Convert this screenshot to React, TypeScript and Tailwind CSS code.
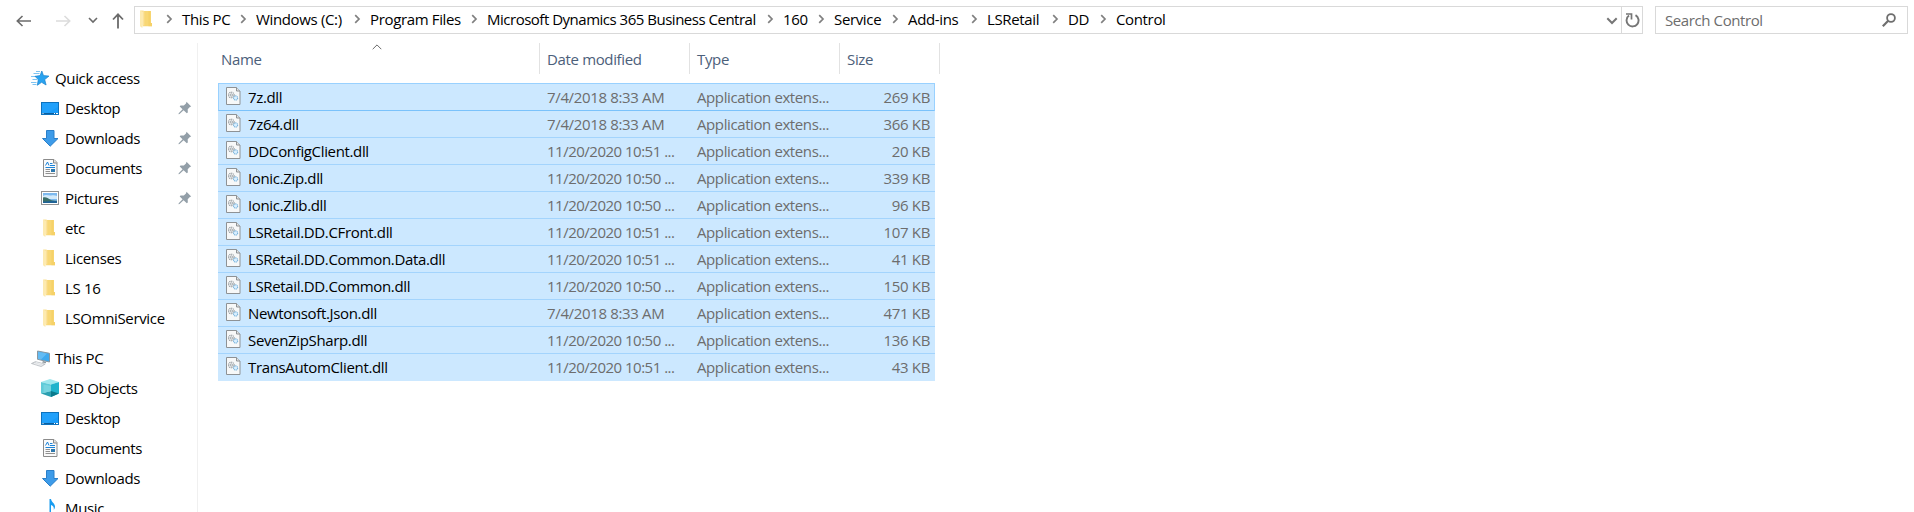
import type { ReactNode } from "react";

const Folder = () => (
  <svg width="18" height="18" viewBox="0 0 18 18" className="shrink-0">
    <path d="M3.500 1H13v12h1v3.200H5z" fill="#f8d775" />
    <path d="M12.300 1v12h1.700v3.200H10.500V1z" fill="#f5ce62" opacity=".7" />
    <path d="M2 .5l3.200 1v12.300L4.300 18 2 16.200z" fill="#fdeab0" />
    <path d="M2 .5h3.500l.8.9v14H5V2z" fill="#fbe19a" />
  </svg>
);

const Star = () => (
  <svg width="18" height="18" viewBox="0 0 18 18" className="shrink-0">
    <path d="M2.500 4.500h6M5 2.500h4M0 7.500h5M1.500 10.500h5M0 13.500h5.500M1.500 15.500h4" stroke="#6fbdf0" strokeWidth=".9" />
    <path d="M10.800 2l1.700 4.600 5.500.5-4.300 3.500 1.400 5.400-4.500-2.700-4.300 3 1-5.700-3.300-3.300 5.100-.7z" fill="#29a3f0" stroke="#1d83cc" strokeWidth=".7" />
  </svg>
);

const Desktop = () => (
  <svg width="18" height="18" viewBox="0 0 18 18" className="shrink-0">
    <rect x=".5" y="3.500" width="17" height="12" fill="#1a9cf9" stroke="#0e72bd" />
    <path d="M17 4v4L6 14H1V4z" fill="#35adff" opacity=".35" />
    <path d="M1 14.500h16" stroke="#0b5e9e" />
    <path d="M1.500 14.500h1M13 14.500h1M15 14.500h2" stroke="#fff" />
  </svg>
);

const Down = () => (
  <svg width="18" height="18" viewBox="0 0 18 18" className="shrink-0">
    <path d="M5.500 1.500h7.500V9.500h4L9.200 17.200 1.500 9.500h4z" fill="#3d9be9" stroke="#2a7fc9" />
  </svg>
);

const Doc = () => (
  <svg width="18" height="18" viewBox="0 0 18 18" className="shrink-0">
    <path d="M2.500.5h10.500l3 3v14H2.500z" fill="#fafafa" stroke="#8b8b8b" />
    <path d="M12.500.5v3.500H16" fill="#e4e4e4" stroke="#8b8b8b" />
    <path d="M4.500 6.500l2-3.500 1.500 3.500M9 4.500h2.500M9 6.500h5M4.500 8.500h9.500" stroke="#1c83d8" fill="none" />
    <path d="M4.500 10.500H9M4.500 12.500H9M4.500 14.500h9.500" stroke="#909090" />
    <rect x="10" y="10" width="4" height="3" fill="#2d78ad" />
  </svg>
);

const Picture = () => (
  <svg width="18" height="18" viewBox="0 0 18 18" className="shrink-0">
    <rect x=".5" y="2.500" width="17" height="13" fill="#fff" stroke="#929292" />
    <rect x="2" y="4" width="14" height="10" fill="#7db9ee" />
    <path d="M2 7c3-2 6 0 8-.5S14 6 16 7v3H2z" fill="#d3eafa" />
    <path d="M2 8.500c3-.8 5 .5 7 2s5 1 7 1.200V14H2z" fill="#3b6f68" />
    <path d="M2 12.500c5 0 9-1 14-.3V14H2z" fill="#1f6396" />
  </svg>
);

const Computer = () => (
  <svg width="19" height="18" viewBox="0 0 19 18" className="shrink-0">
    <path d="M6.500 2l12 2.300v8.700L6.500 10.300z" fill="#3fa9ee" stroke="#8b969e" strokeWidth="1" />
    <path d="M7 2.700l9 1.700-6 6.200-3-.7z" fill="#7cc8f7" opacity=".6" />
    <path d="M12 12l3 .7v1.500l-4-.8z" fill="#8f989e" />
    <path d="M.4 14.500l4-1.900 9.800 2.500-4 2.500z" fill="#d6dade" stroke="#a9afb4" strokeWidth=".6" />
    <path d="M3 14.400l7.500 2M5 13.500l7 1.900" stroke="#f6f6f6" strokeWidth=".7" />
  </svg>
);

const Cube = () => (
  <svg width="18" height="18" viewBox="0 0 18 18" className="shrink-0">
    <path d="M0 3l9-3 9 3-8 2.500z" fill="#9fe8ee" />
    <path d="M0 3l10 2.500V12L0 14.500z" fill="#5fcbd8" />
    <path d="M10 5.500L18 3v11.500L10 18z" fill="#1fb3cc" />
    <path d="M0 14.500L10 12v6z" fill="#2b9fb0" />
    <path d="M10 12l8 2.500L10 18z" fill="#0b7a8c" />
    <path d="M2.500 5.500L10 7v5l-7.500 2z" fill="#86dbe4" opacity=".6" />
  </svg>
);

const Note = () => (
  <svg width="18" height="18" viewBox="0 0 18 18" className="shrink-0">
    <path d="M8.500 0H10c.3 3 4 4.500 4 7.500 0 1.500-.6 2.500-1.300 3.500.6-3-.7-4.200-2.700-5V14c0 2-1.800 3.500-4 3.500-1.500 0-2.500-.8-2.500-2 0-1.700 2-3 5-2.500z" fill="#189cf0" />
  </svg>
);

const Pin = () => (
  <svg width="14" height="14" viewBox="0 0 14 14" className="shrink-0">
    <path d="M8.500.8L13.200 5.500l-1.300.5-2.200 2.300.1 3.200-1 .8L5.600 9.300 1.500 13l-1 .2.200-1L4.600 8.300 1.700 5.500l.8-1 3.300.1 2.200-2.200z" fill="#939fa8" />
  </svg>
);

const Dll = () => (
  <svg width="15" height="18" viewBox="0 0 15 18" className="shrink-0">
    <path d="M.5.5h10l3.500 3.500v13.500H.5z" fill="#f7f8f8" stroke="#8e9295" />
    <path d="M10.500.5V4H14" fill="#dfe2e4" stroke="#8e9295" />
    <circle cx="5.300" cy="8" r="2.800" fill="none" stroke="#8d9499" strokeWidth="1.100" strokeDasharray="1.200 .6" />
    <circle cx="5.300" cy="8" r="1.200" fill="none" stroke="#8d9499" strokeWidth=".8" />
    <circle cx="9.600" cy="11" r="2.100" fill="#d9efff" stroke="#78b3dc" strokeWidth="1.100" strokeDasharray="1.200 .5" />
  </svg>
);

const Chevron = () => (
  <svg width="7" height="10" viewBox="0 0 7 10" className="shrink-0">
    <path d="M1.200 1.200L5 5 1.200 8.800" fill="none" stroke="#808080" strokeWidth="1.700" />
  </svg>
);

const ChevronDown = ({ className }: { className: string }) => (
  <svg width="12" height="8" viewBox="0 0 12 8" className={className}>
    <path d="M1.300 1.300L6 6l4.700-4.700" fill="none" stroke="currentColor" strokeWidth="2" />
  </svg>
);

const crumbs: [string, string][] = [
  ["This PC", "w-[74px]"],
  ["Windows (C:)", "w-[114px]"],
  ["Program Files", "w-[117px]"],
  ["Microsoft Dynamics 365 Business Central", "w-[296px] tracking-[-0.49px]"],
  ["160", "w-[51px]"],
  ["Service", "w-[74px]"],
  ["Add-ins", "w-[79px]"],
  ["LSRetail", "w-[81px]"],
  ["DD", "w-[48px]"],
  ["Control", "w-[60px]"],
];

const AddressBar = () => (
  <header className="flex h-[43px] pt-1.5">
    <nav className="flex h-7 w-[134px] shrink-0 items-center pl-4 text-[#6b6b6b]">
      <svg width="16" height="12" viewBox="0 0 16 12" className="mt-0.5">
        <path d="M6.500 1L1.300 6l5.200 5M1.500 6H15" fill="none" stroke="currentColor" strokeWidth="1.600" />
      </svg>
      <svg width="16" height="12" viewBox="0 0 16 12" className="mt-0.5 ml-[23px] text-[#dcdcdc]">
        <path d="M9.500 1l5.200 5-5.200 5M14.500 6H1" fill="none" stroke="currentColor" strokeWidth="1.600" />
      </svg>
      <svg width="10" height="7" viewBox="0 0 10 7" className="ml-[17px]">
        <path d="M1 1l4 4 4-4" fill="none" stroke="currentColor" strokeWidth="1.600" />
      </svg>
      <svg width="12" height="16" viewBox="0 0 12 16" className="mt-0.5 ml-3.5">
        <path d="M1 6.500L6 1.300l5 5.200M6 1.500V15.500" fill="none" stroke="currentColor" strokeWidth="1.800" />
      </svg>
    </nav>
    <div className="flex h-7 w-[1509px] shrink-0 items-center border border-[#d9d9d9]">
      <div className="flex w-[31px] pb-0.5 pl-[3px]">
        <Folder />
      </div>
      <div className="flex flex-1 items-center pb-0.5">
        <Chevron />
        <div className="flex items-center pl-[9px]">
          {crumbs.map(([name, width], i) => (
            <div key={name} className={`flex items-center justify-between pr-[9px] ${width}`}>
              <span className="whitespace-nowrap">{name}</span>
              {i < crumbs.length - 1 && <Chevron />}
            </div>
          ))}
        </div>
      </div>
      <ChevronDown className="mt-0.5 mr-[3px] text-[#767676]" />
      <div className="flex h-full w-[21px] items-center justify-center border-l border-[#d9d9d9]">
        <svg width="15" height="15" viewBox="0 0 15 15">
          <path d="M10.500 2.200A6 6 0 1 1 4 2.600" fill="none" stroke="#767676" strokeWidth="1.900" />
          <path d="M1 1h5.500v5.500" fill="none" stroke="#767676" strokeWidth="1.700" />
        </svg>
      </div>
    </div>
    <div className="ml-3 flex h-7 w-[253px] items-center justify-between border border-[#d9d9d9] pr-[11px] pl-[9px] text-[#6d6d6d]">
      <span className="tracking-[-0.4px]">Search Control</span>
      <svg width="14" height="14" viewBox="0 0 14 14">
        <circle cx="9" cy="5" r="3.900" fill="none" stroke="#6e6e6e" strokeWidth="1.800" />
        <path d="M6.200 7.800L.8 13.200" stroke="#6e6e6e" strokeWidth="2.200" />
      </svg>
    </div>
  </header>
);

const Root = ({ icon, label }: { icon: ReactNode; label: string }) => (
  <div className="flex h-[30px] items-center pl-[31px]">
    <div className="flex w-6">{icon}</div>
    <span>{label}</span>
  </div>
);

const Item = ({ icon, label, pinned }: { icon: ReactNode; label: string; pinned?: boolean }) => (
  <div className="flex h-[30px] items-center pr-[5px] pl-[41px]">
    <div className="flex w-6">{icon}</div>
    <span className="flex-1">{label}</span>
    {pinned && <Pin />}
  </div>
);

const Sidebar = () => (
  <aside className="h-full w-[198px] shrink-0 overflow-hidden border-r border-[#f0f0f0] pt-5">
    <Root icon={<Star />} label="Quick access" />
    <Item icon={<Desktop />} label="Desktop" pinned />
    <Item icon={<Down />} label="Downloads" pinned />
    <Item icon={<Doc />} label="Documents" pinned />
    <Item icon={<Picture />} label="Pictures" pinned />
    <Item icon={<Folder />} label="etc" />
    <Item icon={<Folder />} label="Licenses" />
    <Item icon={<Folder />} label="LS 16" />
    <Item icon={<Folder />} label="LSOmniService" />
    <div className="h-2.5" />
    <Root icon={<Computer />} label="This PC" />
    <Item icon={<Cube />} label="3D Objects" />
    <Item icon={<Desktop />} label="Desktop" />
    <Item icon={<Doc />} label="Documents" />
    <Item icon={<Down />} label="Downloads" />
    <Item icon={<Note />} label="Music" />
  </aside>
);

const files: [string, string, string][] = [
  ["7z.dll", "7/4/2018 8:33 AM", "269 KB"],
  ["7z64.dll", "7/4/2018 8:33 AM", "366 KB"],
  ["DDConfigClient.dll", "11/20/2020 10:51 ...", "20 KB"],
  ["Ionic.Zip.dll", "11/20/2020 10:50 ...", "339 KB"],
  ["Ionic.Zlib.dll", "11/20/2020 10:50 ...", "96 KB"],
  ["LSRetail.DD.CFront.dll", "11/20/2020 10:51 ...", "107 KB"],
  ["LSRetail.DD.Common.Data.dll", "11/20/2020 10:51 ...", "41 KB"],
  ["LSRetail.DD.Common.dll", "11/20/2020 10:50 ...", "150 KB"],
  ["Newtonsoft.Json.dll", "7/4/2018 8:33 AM", "471 KB"],
  ["SevenZipSharp.dll", "11/20/2020 10:50 ...", "136 KB"],
  ["TransAutomClient.dll", "11/20/2020 10:51 ...", "43 KB"],
];

const FileList = () => (
  <main className="flex-1 pl-5">
    <div className="flex h-[31px] w-[722px] items-center text-[#4c607a]">
      <div className="relative flex h-full w-[322px] items-center border-r border-[#e2e2e2] pt-px pl-[3px]">
        <svg width="10" height="6" viewBox="0 0 10 6" className="absolute top-px left-[154px]">
          <path d="M.7 5.200L5 .9l4.300 4.300" fill="none" stroke="#6a6a6a" />
        </svg>
        Name
      </div>
      <div className="flex h-full w-[150px] items-center border-r border-[#e2e2e2] pt-px pl-[7px]">Date modified</div>
      <div className="flex h-full w-[150px] items-center border-r border-[#e2e2e2] pt-px pl-[7px]">Type</div>
      <div className="flex h-full w-[100px] items-center border-r border-[#e2e2e2] pt-px pl-[7px]">Size</div>
    </div>
    <div className="mt-[9px] w-[717px]">
      {files.map(([name, date, size], i) => (
        <div
          key={name}
          className={`flex items-center bg-[#cce8ff] ${
            i === 0
              ? "h-7 border border-[#99d1ff] border-b-[#7ac2fb] pr-1 pl-[7px]"
              : i === files.length - 1
                ? "h-[27px] pr-[5px] pb-px pl-2"
                : "h-[27px] border-b border-[#a3d4fd] pr-[5px] pl-2"
          }`}
        >
          <div className="mb-0.5 flex w-[22px]">
            <Dll />
          </div>
          <span className="w-[299px]">{name}</span>
          <span className={`w-[150px] text-[#6d6d6d] ${date.endsWith("...") ? "tracking-[-0.5px]" : ""}`}>{date}</span>
          <span className="w-[150px] tracking-[-0.4px] text-[#6d6d6d]">Application extens...</span>
          <span className="flex-1 text-right text-[#6d6d6d]">{size}</span>
        </div>
      ))}
    </div>
  </main>
);

export default function App() {
  return (
    <div className="flex h-[512px] w-[1914px] flex-col overflow-hidden bg-white font-['Open_Sans','Noto_Sans',sans-serif] text-[15px] leading-5 tracking-[-0.35px] text-black">
      <AddressBar />
      <div className="flex min-h-0 flex-1">
        <Sidebar />
        <FileList />
      </div>
    </div>
  );
}
